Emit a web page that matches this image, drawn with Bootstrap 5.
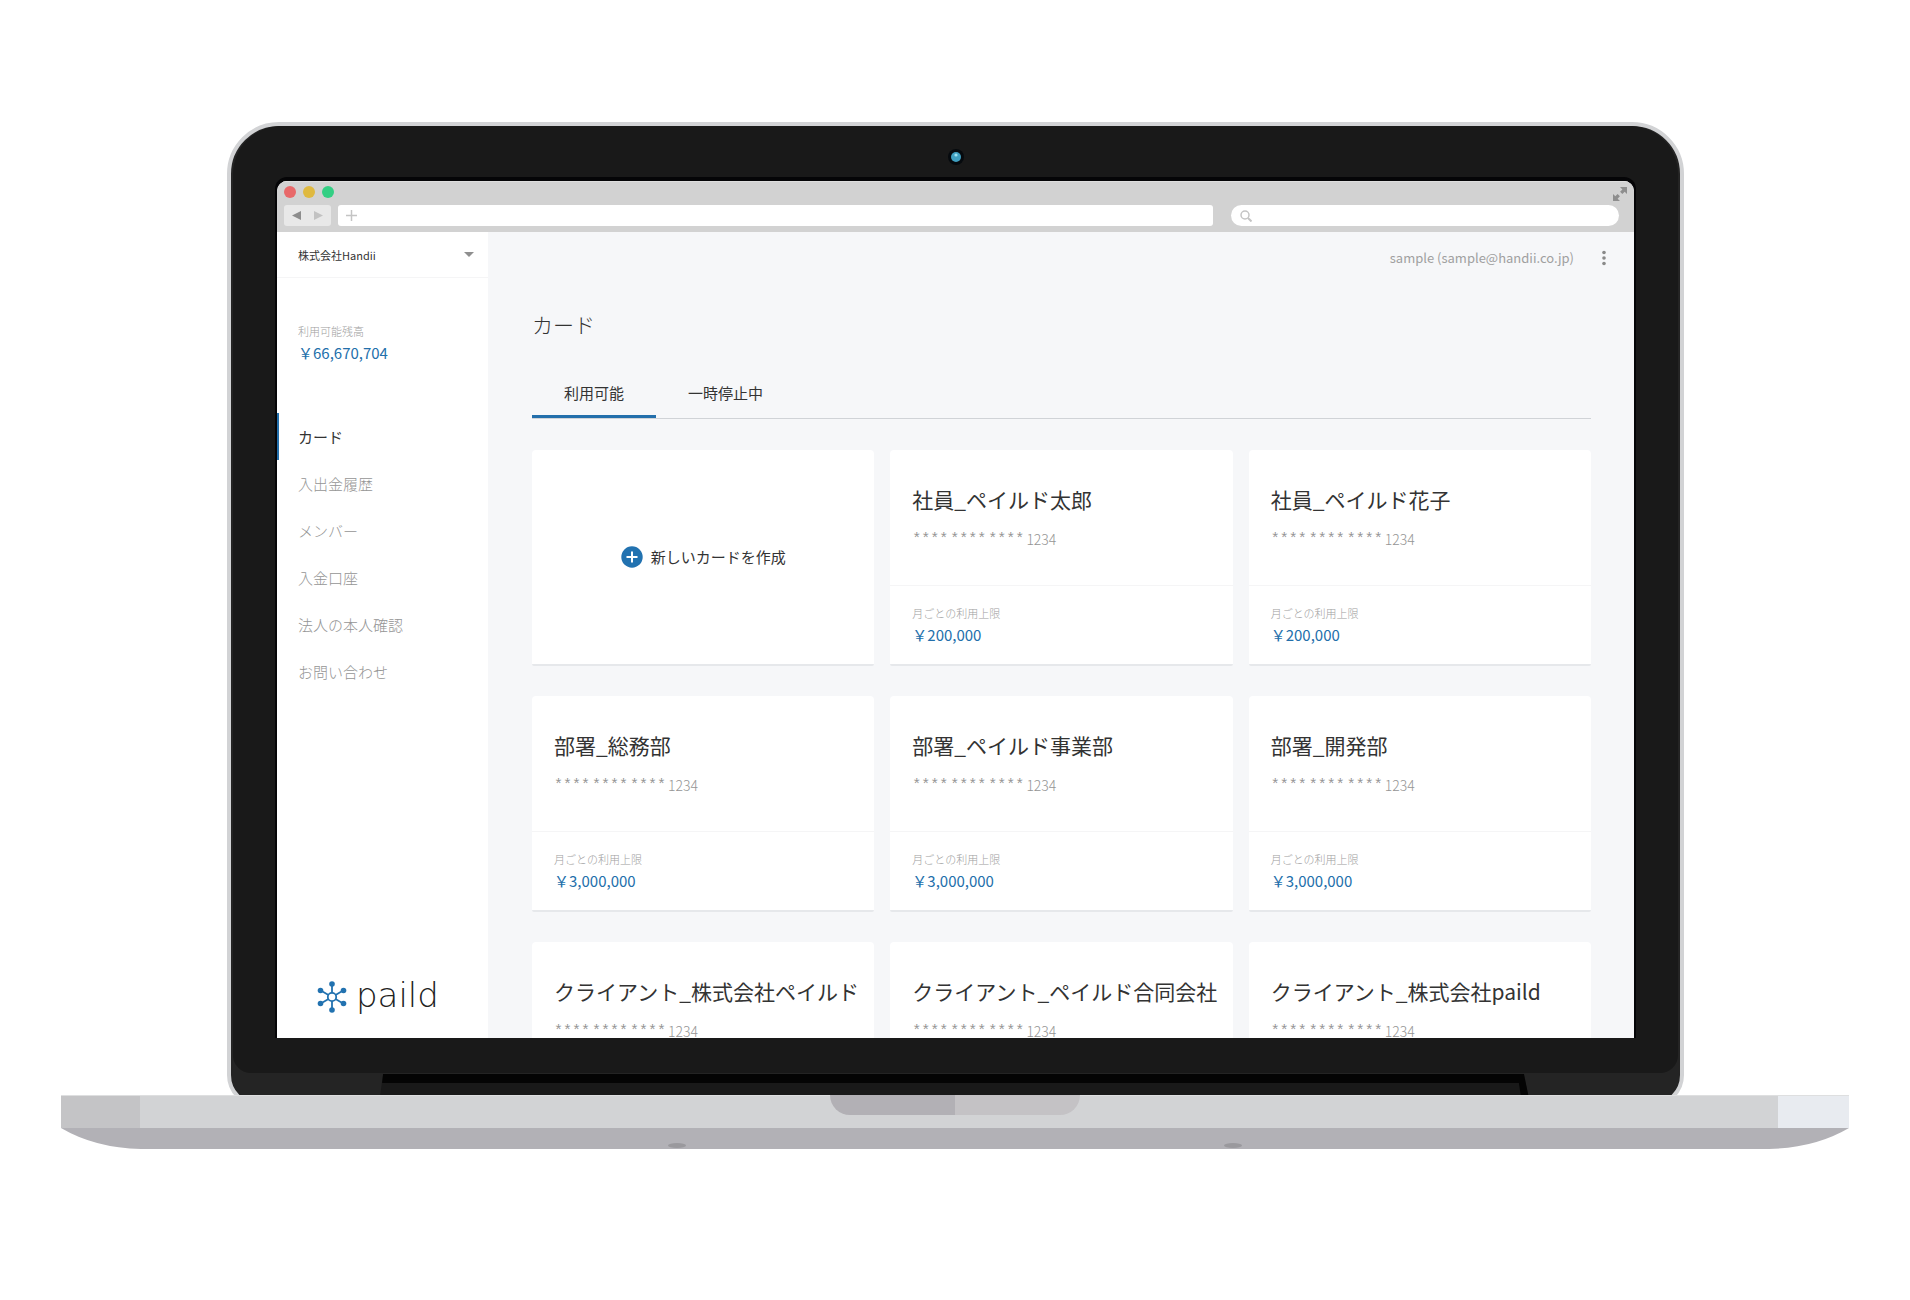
<!DOCTYPE html>
<html lang="ja">
<head>
<meta charset="utf-8">
<meta name="viewport" content="width=device-width, initial-scale=1">
<title>paild カード</title>
<link href="https://cdn.jsdelivr.net/npm/bootstrap@5.3.0/dist/css/bootstrap.min.css" rel="stylesheet">
<style>
  :root { --brand: #236fab; --ink: #333; --muted-ink: #a0a0a0; --silver: #d2d3d5; }
  body { font-family: "Noto Sans CJK JP", sans-serif; color: var(--ink); background: #fff; font-size: 15px; line-height: 24px; }

  /* laptop */
  .laptop { padding: 122px 61px 0; }
  .lid { margin: 0 165px -12px 166px; background: #242424; border: 4px solid var(--silver); border-radius: 52px 52px 32px 32px; overflow: hidden; }
  .bezel { margin: 0 2px; padding: 0 44px 35px; background: #191919; border-radius: 48px 48px 18px 18px; }
  .camera-row { height: 55px; padding-top: 6px; }
  .hinge { display: block; width: 100%; height: 30px; }
  .viewport { aspect-ratio: 1357 / 857; border-radius: 10px 10px 0 0; box-shadow: 0 -2px 0 2px #050507; background: #f6f7f9; }

  /* browser bar */
  .chrome-bar { background: #d2d2d2; padding: 4px 15px 7px 7px; border-top: 1px solid #dedede; height: 51px; }
  .dots { gap: 7px; }
  .dot { width: 12px; height: 12px; border-radius: 50%; }
  .dot-close { background: #e8696a; }
  .dot-min { background: #dfb940; }
  .dot-max { background: #34cf84; }
  .tool-row { margin-top: 4px; }
  .nav-pair { width: 47px; background: #e8e8e8; border-radius: 3px; }
  .nav-pair button { background: none; border: 0; line-height: 0; }
  .tool { height: 21px; }
  .url-field, .search-field { background: #fff; min-width: 0; }
  .url-field { flex: 16 1 0; border-radius: 3px; margin-left: 7px; }
  .search-field { flex: 7 1 0; border-radius: 11px; margin-left: 18px; padding-left: 9px; }
  .url-field input, .search-field input { border: 0; background: none; outline: 0; height: 21px; font-size: 11px; min-width: 0; }
  .expand { margin-right: -8px; padding-top: 1px; background: none; line-height: 0; }

  /* sidebar */
  .side { width: 211px; background: #fff; }
  .company { height: 46px; border-bottom: 1px solid #f5f5f6; padding: 0 14px 0 21px; }
  .company select { appearance: none; border: 0; background: none; font-size: 11px; color: var(--ink); padding: 0; outline: 0; }
  .balance { padding: 44px 21px 0; margin-bottom: 48px; }
  .caption-sm { font-size: 11px; line-height: 18px; color: var(--muted-ink); margin-bottom: 1px; font-weight: 300; }
  .amount { color: var(--brand); font-size: 15px; line-height: 24px; }
  .side-nav a { line-height: 47px; padding: 0 19px; border-left: 2px solid transparent; color: #959595; font-weight: 300; text-decoration: none; }
  .side-nav a.active { color: var(--ink); border-left-color: var(--brand); font-weight: 400; }
  .brand { padding: 0 39px 21px; height: 61px; color: #222; text-decoration: none; }
  .wordmark { font-family: "DejaVu Sans Light", "DejaVu Sans", sans-serif; font-weight: 200; font-size: 34px; line-height: 40px; padding-bottom: 4px; }

  /* main */
  .user-row { height: 52px; padding-right: 24px; gap: 24px; color: var(--muted-ink); font-size: 13px; }
  .user-row button { background: none; border: 0; padding: 0; width: 12px; line-height: 0; }
  .content { padding: 25px 43px 0 44px; }
  .page-title { font-size: 21px; line-height: 30px; font-weight: 300; margin-bottom: 31px; }
  .tabs { border-bottom: 1px solid #d0d3d7; margin-bottom: 31px; }
  .tabs button { background: none; border: 0; border-bottom: 3px solid transparent; height: 48px; padding: 0 32px; line-height: 45px; color: var(--ink); }
  .tabs button.active { border-bottom-color: var(--brand); }
  .deck { --bs-gutter-x: 16px; --bs-gutter-y: 30px; }
  .tile { background: #fff; border: 0; border-bottom: 2px solid #e6e8eb; border-radius: 4px 4px 2px 2px; height: 216px; width: 100%; color: var(--ink); }
  .tile-top { height: 136px; padding: 33px 22px 0; border-bottom: 1px solid #f5f5f6; }
  .tile-top h2 { font-size: 21px; line-height: 32px; font-weight: 400; margin-bottom: 12px; white-space: nowrap; }
  .tile-foot { padding: 18px 22px 0; }
  .number { gap: 2px; color: #959595; font-size: 14px; font-weight: 300; line-height: 24px; }
  .stars { font-family: "Liberation Mono", monospace; font-size: 15px; line-height: 26px; }

  /* base */
  .base { z-index: 1; }
  .deck-edge { height: 33px; background: var(--silver); border-top: 1px solid #dedfe0; }
  .edge-left { width: 79px; background: #c4c4c6; }
  .edge-right { width: 71px; background: #e8ebf0; }
  .notch { width: 250px; height: 20px; border-radius: 0 0 20px 20px; background: linear-gradient(90deg, #b2b0b5 50%, #c4c2c5 50%); }
  .belly { height: 21px; background: #b2b1b6; gap: 33%; padding-bottom: 1px; }
  .foot { width: 18px; height: 5px; border-radius: 50%; background: #9a999d; }
</style>
</head>
<body>
<div class="laptop">
  <div class="lid">
    <div class="bezel">
      <div class="camera-row d-flex justify-content-center align-items-center">
        <svg width="18" height="18" viewBox="0 0 18 18" aria-hidden="true"><circle cx="9" cy="9" r="8" fill="#060a0e"/><circle cx="9" cy="9" r="5" fill="#3f9fc0"/><circle cx="9" cy="7" r="1.6" fill="#9be0f0"/></svg>
      </div>
      <div class="viewport d-flex flex-column overflow-hidden">
        <div class="chrome-bar flex-shrink-0">
          <div class="d-flex justify-content-between align-items-start">
            <div class="dots d-flex"><span class="dot dot-close"></span><span class="dot dot-min"></span><span class="dot dot-max"></span></div>
            <button class="expand border-0 px-0 pb-0" aria-label="全画面"><svg width="14" height="14" viewBox="0 0 14 14" fill="#8e8e8e"><path d="M7 0h7v7l-2.300-2.300-2.400 2.300-2.200-2.200 2.300-2.400zM0 14V7l2.300 2.300L4.600 7l2.300 2.300-2.300 2.400L7 14z"/></svg></button>
          </div>
          <div class="tool-row d-flex">
            <div class="nav-pair tool d-flex align-items-center justify-content-between px-2">
              <button class="p-0" aria-label="戻る"><svg width="9" height="9" viewBox="0 0 9 9"><path d="M9 0v9L0 4.500z" fill="#8d8d8d"/></svg></button>
              <button class="p-0" aria-label="進む"><svg width="9" height="9" viewBox="0 0 9 9"><path d="M0 0v9l9-4.500z" fill="#c2c2c2"/></svg></button>
            </div>
            <div class="url-field tool d-flex align-items-center ps-2">
              <svg width="11" height="11" viewBox="0 0 11 11"><path d="M5.500 0v11M0 5.500h11" stroke="#c4c4c4" stroke-width="1.500"/></svg>
              <input class="flex-fill" type="text" aria-label="アドレス">
            </div>
            <div class="search-field tool d-flex align-items-center">
              <svg width="12" height="12" viewBox="0 0 12 12" fill="none" stroke="#c4c4c4"><circle cx="5" cy="5" r="4" stroke-width="1.500"/><path d="M8 8l3.500 3.500" stroke-width="2"/></svg>
              <input class="flex-fill" type="text" aria-label="検索">
            </div>
          </div>
        </div>
        <div class="d-flex flex-fill overflow-hidden">
          <aside class="side d-flex flex-column flex-shrink-0">
            <div class="company d-flex align-items-center justify-content-between flex-shrink-0">
              <select class="flex-fill" aria-label="会社"><option>株式会社Handii</option></select>
              <svg width="10" height="5" viewBox="0 0 10 5"><path d="M0 0h10L5 5z" fill="#8f8f8f"/></svg>
            </div>
            <div class="balance">
              <div class="caption-sm">利用可能残高</div>
              <div class="amount">￥66,670,704</div>
            </div>
            <nav class="side-nav d-flex flex-column">
              <a class="active" href="#">カード</a>
              <a href="#">入出金履歴</a>
              <a href="#">メンバー</a>
              <a href="#">入金口座</a>
              <a href="#">法人の本人確認</a>
              <a href="#">お問い合わせ</a>
            </nav>
            <a class="brand d-flex align-items-center mt-auto" href="#">
              <svg class="flex-shrink-0 me-2" width="32" height="34" viewBox="-16 -17 32 34" fill="none" stroke="#2272b0" stroke-width="1.800">
                <path d="M0-4v-7M0 4v7M3.500-2l6-3.500M-3.500 2l-6 3.500M3.500 2l6 3.500M-3.500-2l-6-3.500"/>
                <circle r="4.200"/>
                <g fill="#2272b0" stroke="none"><circle cy="-13" r="2.800"/><circle cy="13" r="2.800"/><circle cx="11.500" cy="-6.500" r="2.800"/><circle cx="-11.500" cy="6.500" r="2.800"/><circle cx="11.500" cy="6.500" r="2.800"/><circle cx="-11.500" cy="-6.500" r="2.800"/></g>
              </svg>
              <span class="wordmark">paild</span>
            </a>
          </aside>
          <main class="flex-fill">
            <div class="user-row d-flex align-items-center justify-content-end">
              <span>sample (sample@handii.co.jp)</span>
              <button aria-label="メニュー"><svg width="12" height="16" viewBox="0 0 12 16" fill="#8a8a8a"><circle cx="6" cy="2.500" r="1.800"/><circle cx="6" cy="8" r="1.800"/><circle cx="6" cy="13.500" r="1.800"/></svg></button>
            </div>
            <div class="content">
              <h1 class="page-title">カード</h1>
              <div class="tabs d-flex" role="tablist">
                <button class="active" role="tab" aria-selected="true">利用可能</button>
                <button role="tab" aria-selected="false">一時停止中</button>
              </div>
              <div class="row row-cols-3 deck">
                <div class="col"><button class="tile d-flex align-items-center justify-content-center gap-2">
                  <svg width="22" height="22" viewBox="0 0 22 22"><circle cx="11" cy="11" r="10.700" fill="#2272b0"/><path d="M11 5.500v11M5.500 11h11" stroke="#fff" stroke-width="2"/></svg>
                  <span>新しいカードを作成</span></button></div>
                <div class="col"><article class="tile"><div class="tile-top"><h2>社員_ペイルド太郎</h2><div class="number d-flex"><span class="stars">****</span><span class="stars">****</span><span class="stars">****</span><span>1234</span></div></div><div class="tile-foot"><div class="caption-sm">月ごとの利用上限</div><div class="amount">￥200,000</div></div></article></div>
                <div class="col"><article class="tile"><div class="tile-top"><h2>社員_ペイルド花子</h2><div class="number d-flex"><span class="stars">****</span><span class="stars">****</span><span class="stars">****</span><span>1234</span></div></div><div class="tile-foot"><div class="caption-sm">月ごとの利用上限</div><div class="amount">￥200,000</div></div></article></div>
                <div class="col"><article class="tile"><div class="tile-top"><h2>部署_総務部</h2><div class="number d-flex"><span class="stars">****</span><span class="stars">****</span><span class="stars">****</span><span>1234</span></div></div><div class="tile-foot"><div class="caption-sm">月ごとの利用上限</div><div class="amount">￥3,000,000</div></div></article></div>
                <div class="col"><article class="tile"><div class="tile-top"><h2>部署_ペイルド事業部</h2><div class="number d-flex"><span class="stars">****</span><span class="stars">****</span><span class="stars">****</span><span>1234</span></div></div><div class="tile-foot"><div class="caption-sm">月ごとの利用上限</div><div class="amount">￥3,000,000</div></div></article></div>
                <div class="col"><article class="tile"><div class="tile-top"><h2>部署_開発部</h2><div class="number d-flex"><span class="stars">****</span><span class="stars">****</span><span class="stars">****</span><span>1234</span></div></div><div class="tile-foot"><div class="caption-sm">月ごとの利用上限</div><div class="amount">￥3,000,000</div></div></article></div>
                <div class="col"><article class="tile"><div class="tile-top"><h2>クライアント_株式会社ペイルド</h2><div class="number d-flex"><span class="stars">****</span><span class="stars">****</span><span class="stars">****</span><span>1234</span></div></div></article></div>
                <div class="col"><article class="tile"><div class="tile-top"><h2>クライアント_ペイルド合同会社</h2><div class="number d-flex"><span class="stars">****</span><span class="stars">****</span><span class="stars">****</span><span>1234</span></div></div></article></div>
                <div class="col"><article class="tile"><div class="tile-top"><h2>クライアント_株式会社paild</h2><div class="number d-flex"><span class="stars">****</span><span class="stars">****</span><span class="stars">****</span><span>1234</span></div></div></article></div>
              </div>
            </div>
          </main>
        </div>
      </div>
    </div>
    <svg class="hinge" viewBox="0 0 1448 30" preserveAspectRatio="none" aria-hidden="true">
      <path d="M152 1H1292l6 29H148z" fill="#191919"/>
      <path d="M152 1H1292l6 29H1290l-3-20H151z" fill="#040404"/>
    </svg>
  </div>
  <div class="base position-relative">
    <div class="deck-edge d-flex justify-content-between"><span class="edge-left"></span><span class="edge-right"></span></div>
    <div class="notch position-absolute top-0 start-50 translate-middle-x"></div>
    <div class="d-flex">
      <svg width="80" height="21" viewBox="0 0 80 21" aria-hidden="true"><path d="M0 0h80v21Q34 20 0 0z" fill="#b2b1b6"/></svg>
      <div class="belly flex-fill d-flex justify-content-center align-items-end"><span class="foot"></span><span class="foot"></span></div>
      <svg width="80" height="21" viewBox="0 0 80 21" aria-hidden="true"><path d="M80 0H0v21Q46 20 80 0z" fill="#b2b1b6"/></svg>
    </div>
  </div>
</div>
<script src="https://cdn.jsdelivr.net/npm/bootstrap@5.3.0/dist/js/bootstrap.bundle.min.js"></script>
</body>
</html>
